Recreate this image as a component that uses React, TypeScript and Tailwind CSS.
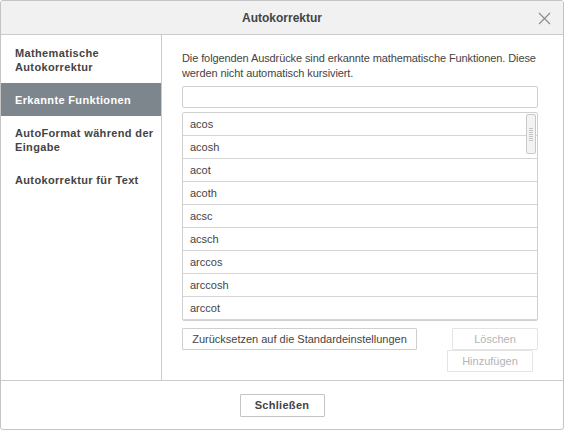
import React, { useState } from 'react'

const menu = [
  { id: 'math', label: ['Mathematische', 'Autokorrektur'] },
  { id: 'func', label: ['Erkannte Funktionen'] },
  { id: 'format', label: ['AutoFormat während der', 'Eingabe'] },
  { id: 'text', label: ['Autokorrektur für Text'] },
]

const functions = ['acos', 'acosh', 'acot', 'acoth', 'acsc', 'acsch', 'arccos', 'arccosh', 'arccot', 'arccoth', 'arccsc']

export default function App() {
  const [active, setActive] = useState('func')
  const [value, setValue] = useState('')

  return (
    <div
      className="w-[564px] h-[430px] flex flex-col bg-white border border-[#c4c4c4] rounded-[3px] overflow-hidden text-[#444]"
      style={{ fontFamily: '"Liberation Sans", Arial, sans-serif' }}
    >
      {/* title bar */}
      <div className="relative h-[34px] shrink-0 bg-[#f1f1f1] border-b border-[#cbcbcb] flex items-center justify-center">
        <span className="text-[12px] font-bold leading-none">Autokorrektur</span>
        <button className="absolute right-[12px] top-[11px] w-[13px] h-[13px] flex items-center justify-center">
          <svg width="13" height="13" viewBox="0 0 13 13" fill="none" stroke="#8a8a8a" strokeWidth="1.1">
            <path d="M1 1 L12 12 M12 1 L1 12" />
          </svg>
        </button>
      </div>

      <div className="flex flex-1 min-h-0">
        {/* left menu */}
        <div className="w-[161px] shrink-0 border-r border-[#cbcbcb] pt-[1px]">
          {menu.map(item => (
            <div
              key={item.id}
              onClick={() => setActive(item.id)}
              className={
                'pl-[14px] pr-[4px] pt-[10px] pb-[9px] text-[11px] leading-[14px] font-bold tracking-[0.35px] cursor-pointer ' +
                (active === item.id ? 'bg-[#7e868d] text-white' : 'text-[#444]')
              }
            >
              {item.label.map(l => (
                <div key={l} className="whitespace-nowrap">{l}</div>
              ))}
            </div>
          ))}
        </div>

        {/* right content */}
        <div className="flex-1 pl-[20px] pr-[25px] pt-[16px]">
          <p className="text-[11px] leading-[15px] tracking-[-0.1px] whitespace-nowrap">
            Die folgenden Ausdrücke sind erkannte mathematische Funktionen. Diese
            <br />
            werden nicht automatisch kursiviert.
          </p>

          <input
            value={value}
            onChange={e => setValue(e.target.value)}
            className="mt-[5px] block w-full h-[22px] border border-[#cfcfcf] rounded-[2px] outline-none px-[6px] text-[11px]"
          />

          <div className="relative mt-[4px] h-[209px] border border-[#cfcfcf] rounded-[2px] overflow-hidden">
            {functions.map(f => (
              <div key={f} className="h-[23px] border-b border-[#d4d4d4] pl-[7px] flex items-center text-[11px]">
                {f}
              </div>
            ))}
            {/* scrollbar thumb */}
            <div className="absolute left-[343px] top-[1px] w-[10px] h-[40px] bg-[#f3f3f3] border border-[#c9c9c9] rounded-[2px] flex flex-col items-center justify-center gap-[1px]">
              {[0, 1, 2, 3, 4, 5, 6].map(i => (
                <div key={i} className="w-[4px] h-[1px] bg-[#c4c4c4]" />
              ))}
            </div>
          </div>

          <div className="mt-[7px] flex justify-between items-start">
            <button className="shrink-0 w-[235px] h-[22px] px-[4px] border border-[#cfcfcf] rounded-[1px] text-[11px] leading-[20px] whitespace-nowrap text-[#444]">
              Zurücksetzen auf die Standardeinstellungen
            </button>
            <div className="flex flex-col items-end">
              <button disabled className="w-[86px] h-[22px] border border-[#e4e4e4] rounded-[1px] text-[11px] leading-[20px] whitespace-nowrap text-[#b4b4b4]">
                Löschen
              </button>
              <button disabled className="w-[86px] h-[22px] mr-[5px] border border-[#e4e4e4] rounded-[1px] text-[11px] leading-[20px] whitespace-nowrap text-[#b4b4b4]">
                Hinzufügen
              </button>
            </div>
          </div>
        </div>
      </div>

      {/* footer */}
      <div className="h-[49px] shrink-0 border-t border-[#cbcbcb] flex items-center justify-center">
        <button className="w-[85px] h-[23px] border border-[#c4c4c4] rounded-[1px] text-[11px] leading-[21px] font-bold tracking-[0.3px] text-[#444]">
          Schließen
        </button>
      </div>
    </div>
  )
}
